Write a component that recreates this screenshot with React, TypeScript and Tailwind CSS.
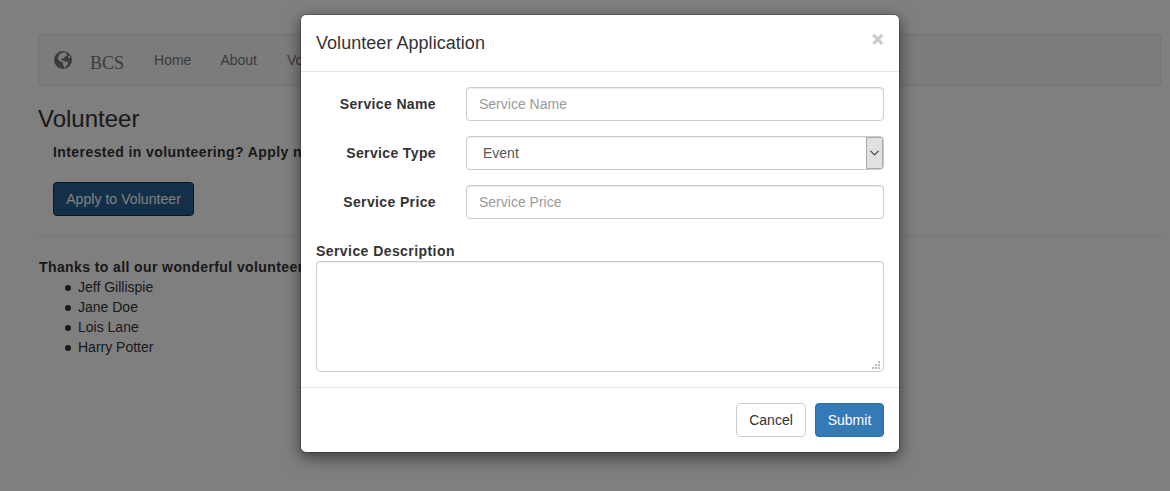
import type { ReactNode } from "react";

function GlobeIcon() {
  return (
    <svg width="18" height="18" viewBox="0 0 18 18" className="block">
      <circle cx="9" cy="9" r="9" fill="#777" />
      <path
        d="M5.500 3.600 7.200 2.200 9 1.500l2.600-.1 1.300.9-.6.900.8.900-1.100 1.300-1.500.3-.3 1.300-1.700.4-.9.9.2 1.200 1.500.1 1.300.9 2.200.1 1.500 1.100-.6 1.900-1.400 1.400-.8 1.300-1.300.4-.6-1.900-.9-1.700.1-1.500-1.600-.9L5 9.500 3.700 7.200z"
        fill="#f8f8f8"
      />
      <path d="m14.200 4.900 1.300-.3.900 2.200-1 .6-1.200-.9z" fill="#f8f8f8" />
    </svg>
  );
}

function Field({ id, label, children }: { id: string; label: string; children: ReactNode }) {
  return (
    <div className="mb-[15px] flex h-[34px]">
      <label htmlFor={id} className="w-[120px] shrink-0 pt-[7px] text-right font-bold tracking-[0.37px]">
        {label}
      </label>
      <div className="ml-[30px] flex-1">{children}</div>
    </div>
  );
}

const volunteers = ["Jeff Gillispie", "Jane Doe", "Lois Lane", "Harry Potter"];

const control =
  "block w-full rounded-[4px] border border-[#ccc] bg-white text-[14px] text-[#555] shadow-[inset_0_1px_1px_rgba(0,0,0,0.075)] outline-none placeholder:text-[#999]";

export default function App() {
  return (
    <div className="relative h-[491px] overflow-hidden bg-white font-['Liberation_Sans',Arial,sans-serif] text-[14px] leading-5 text-[#333]">
      <main className="ml-[38px] w-[1123px] pt-[34px]">
        <nav className="flex h-[52px] items-center rounded-[4px] border border-[#e7e7e7] bg-[#f8f8f8] pl-[15px] text-[#777]">
          <GlobeIcon />
          <span className="ml-[18px] pt-[5px] font-['Liberation_Serif',serif] text-[18px]">BCS</span>
          <a className="ml-[30px]">Home</a>
          <a className="ml-[29px]">About</a>
          <a className="ml-[30px]">Volunteer</a>
        </nav>
        <h3 className="mt-5 text-[24px] leading-[26px]">Volunteer</h3>
        <div className="pl-[15px]">
          <p className="mt-[10px] font-bold tracking-[0.42px]">Interested in volunteering? Apply now!</p>
          <button className="mt-5 block h-[34px] w-[141px] rounded-[4px] border border-[#122b40] bg-[#286090] tracking-[0.06px] text-white">
            Apply to Volunteer
          </button>
        </div>
        <hr className="mt-5 border-[#eee]" />
        <p className="mt-5 pl-px font-bold tracking-[0.4px]">Thanks to all our wonderful volunteers!</p>
        <ul className="pl-[27px]">
          {volunteers.map((name) => (
            <li key={name} className="flex items-center gap-[7px]">
              <span className="mt-px size-[6px] rounded-full bg-[#333]" />
              {name}
            </li>
          ))}
        </ul>
      </main>

      <div className="absolute inset-0 flex items-start justify-center bg-black/50 pt-[14px] pl-[30px]">
        <div className="w-[600px] rounded-[6px] border border-black/20 bg-white bg-clip-padding shadow-[0_5px_15px_rgba(0,0,0,0.5)]">
          <header className="flex h-[57px] justify-between border-b border-[#e5e5e5] px-[15px] pt-[15px]">
            <h4 className="text-[18px] leading-[26px] tracking-[0.04px]">Volunteer Application</h4>
            <button aria-label="Close" className="h-[18px]">
              <svg width="12" height="12" viewBox="0 0 12 12" stroke="#ccc" strokeWidth="3.1" className="block">
                <path d="m1.300 1.900 9 9m0-9-9 9" />
              </svg>
            </button>
          </header>
          <div className="px-[15px] pt-[15px]">
            <Field id="name" label="Service Name">
              <input id="name" placeholder="Service Name" className={control + " h-[34px] px-3"} />
            </Field>
            <Field id="type" label="Service Type">
              <div className={control + " flex h-[34px] items-stretch justify-between overflow-hidden pl-4"}>
                <span className="pt-[6px]">Event</span>
                <span className="flex w-[17px] items-center justify-center border border-[#aaa] bg-[#e1e1e1]">
                  <svg width="9" height="6" viewBox="0 0 9 6" fill="none" stroke="#444" strokeWidth="1.2">
                    <path d="m.5.8 4 4 4-4" />
                  </svg>
                </span>
              </div>
            </Field>
            <Field id="price" label="Service Price">
              <input id="price" placeholder="Service Price" className={control + " h-[34px] px-3"} />
            </Field>
            <label htmlFor="description" className="mt-[22px] block font-bold tracking-[0.43px]">
              Service Description
            </label>
            <div className="relative">
              <textarea id="description" className={control + " h-[111px] resize-none px-3 py-[6px]"} />
              <svg width="8" height="8" viewBox="0 0 8 8" fill="#bbb" className="absolute right-1 bottom-[3px]">
                <path d="M6 0h2v2H6zM3 3h2v2H3zM6 3h2v2H6zM0 6h2v2H0zM3 6h2v2H3zM6 6h2v2H6z" />
              </svg>
            </div>
          </div>
          <footer className="mt-[15px] flex justify-end gap-[9px] border-t border-[#e5e5e5] p-[15px]">
            <button className="h-[34px] w-[70px] rounded-[4px] border border-[#ccc] bg-white">Cancel</button>
            <button className="h-[34px] w-[69px] rounded-[4px] border border-[#2e6da4] bg-[#337ab7] text-white">
              Submit
            </button>
          </footer>
        </div>
      </div>
    </div>
  );
}
